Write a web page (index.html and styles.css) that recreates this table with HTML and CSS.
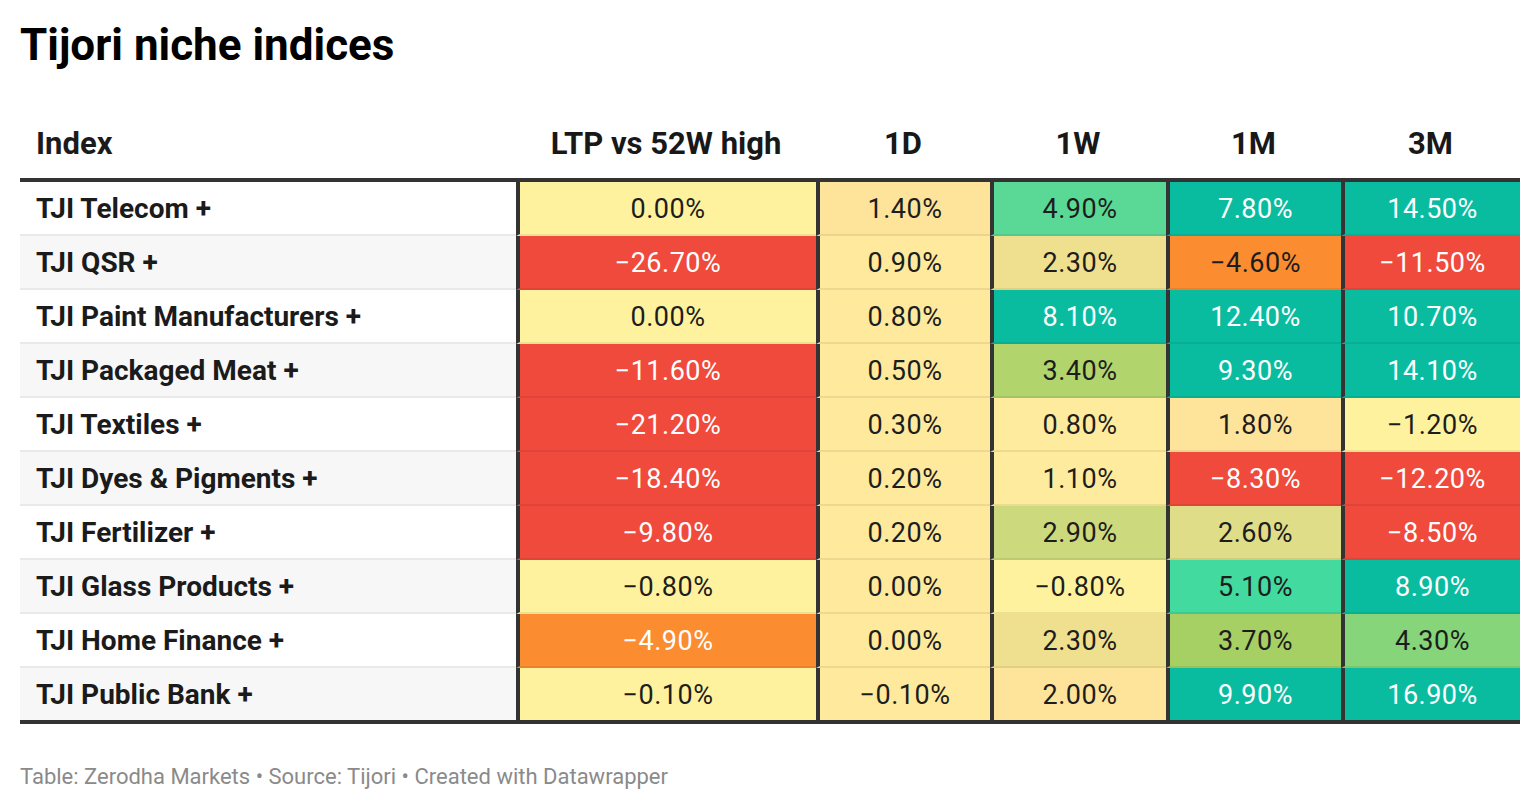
FILE: index.html
```html
<!DOCTYPE html>
<html lang="en">
<head>
<meta charset="utf-8">
<title>Tijori niche indices</title>
<link rel="stylesheet" href="styles.css">
</head>
<body>
<div class="chart">
  <h1 class="title">Tijori niche indices</h1>
  <div class="table">
    <div class="row head">
      <div class="cell name">Index</div>
      <div class="cell">LTP vs 52W high</div>
      <div class="cell">1D</div>
      <div class="cell">1W</div>
      <div class="cell">1M</div>
      <div class="cell">3M</div>
    </div>
    <div class="body">
      <div class="row">
        <div class="cell name">TJI Telecom +</div>
        <div class="cell v y0">0.00%</div>
        <div class="cell v o1">1.40%</div>
        <div class="cell v g4">4.90%</div>
        <div class="cell v tl">7.80%</div>
        <div class="cell v tl">14.50%</div>
      </div>
      <div class="row alt">
        <div class="cell name">TJI QSR +</div>
        <div class="cell v rd">−26.70%</div>
        <div class="cell v y1">0.90%</div>
        <div class="cell v k1">2.30%</div>
        <div class="cell v or dark">−4.60%</div>
        <div class="cell v rd">−11.50%</div>
      </div>
      <div class="row">
        <div class="cell name">TJI Paint Manufacturers +</div>
        <div class="cell v y0">0.00%</div>
        <div class="cell v y1">0.80%</div>
        <div class="cell v tl">8.10%</div>
        <div class="cell v tl">12.40%</div>
        <div class="cell v tl">10.70%</div>
      </div>
      <div class="row alt">
        <div class="cell name">TJI Packaged Meat +</div>
        <div class="cell v rd">−11.60%</div>
        <div class="cell v y1">0.50%</div>
        <div class="cell v g2">3.40%</div>
        <div class="cell v tl">9.30%</div>
        <div class="cell v tl">14.10%</div>
      </div>
      <div class="row">
        <div class="cell name">TJI Textiles +</div>
        <div class="cell v rd">−21.20%</div>
        <div class="cell v y1">0.30%</div>
        <div class="cell v y2">0.80%</div>
        <div class="cell v o1">1.80%</div>
        <div class="cell v y0">−1.20%</div>
      </div>
      <div class="row alt">
        <div class="cell name">TJI Dyes &amp; Pigments +</div>
        <div class="cell v rd">−18.40%</div>
        <div class="cell v y1">0.20%</div>
        <div class="cell v y2">1.10%</div>
        <div class="cell v rd">−8.30%</div>
        <div class="cell v rd">−12.20%</div>
      </div>
      <div class="row">
        <div class="cell name">TJI Fertilizer +</div>
        <div class="cell v rd">−9.80%</div>
        <div class="cell v y1">0.20%</div>
        <div class="cell v g1">2.90%</div>
        <div class="cell v k2">2.60%</div>
        <div class="cell v rd">−8.50%</div>
      </div>
      <div class="row alt">
        <div class="cell name">TJI Glass Products +</div>
        <div class="cell v y0">−0.80%</div>
        <div class="cell v y1">0.00%</div>
        <div class="cell v y0">−0.80%</div>
        <div class="cell v g5">5.10%</div>
        <div class="cell v tl">8.90%</div>
      </div>
      <div class="row">
        <div class="cell name">TJI Home Finance +</div>
        <div class="cell v or">−4.90%</div>
        <div class="cell v y1">0.00%</div>
        <div class="cell v k1">2.30%</div>
        <div class="cell v g3">3.70%</div>
        <div class="cell v g6">4.30%</div>
      </div>
      <div class="row alt last">
        <div class="cell name">TJI Public Bank +</div>
        <div class="cell v y0">−0.10%</div>
        <div class="cell v y1">−0.10%</div>
        <div class="cell v o1">2.00%</div>
        <div class="cell v tl">9.90%</div>
        <div class="cell v tl">16.90%</div>
      </div>
    </div>
  </div>
  <p class="footer">Table: Zerodha Markets • Source: Tijori • Created with Datawrapper</p>
</div>
</body>
</html>
```
FILE: styles.css
```css
html, body {
  margin: 0;
  padding: 0;
  background: #ffffff;
}

.chart {
  padding: 0 20px;
  font-family: Roboto, "Liberation Sans", Arial, sans-serif;
  color: #1d1d1d;
}

.title {
  margin: 0;
  padding-top: 19px;
  font-size: 44px;
  line-height: 52px;
  font-weight: 700;
  color: #000000;
  height: 90px;
  box-sizing: border-box;
}

.table {
  width: 1500px;
}

.row {
  display: grid;
  grid-template-columns: 496px 300px 174px 176px 175px 179px;
  height: 54px;
}

.row.head {
  height: 70px;
  margin-top: 18px;
  border-bottom: 4px solid #333333;
}

.head .cell {
  font-weight: 700;
  font-size: 31px;
  color: #181818;
  border-left: none;
  justify-content: center;
}

.head .cell.name {
  justify-content: flex-start;
  font-size: 31px;
}

.cell {
  display: flex;
  align-items: center;
  justify-content: center;
  font-size: 27px;
  box-sizing: border-box;
}

.cell.name {
  justify-content: flex-start;
  padding-left: 16px;
  font-weight: 700;
  font-size: 28px;
  color: #1b1b1b;
}

.body .row {
  border-bottom: 2px solid rgba(0, 0, 0, 0.085);
  box-sizing: border-box;
}

.body .row.last {
  border-bottom: 4px solid #333333;
  height: 56px;
}

.row.alt .cell.name {
  background: #f7f7f7;
}

.cell.v {
  border-left: 4px solid #333333;
  letter-spacing: 0.5px;
  padding-top: 1px;
}

.body .row .cell.v {
  margin-bottom: -2px;
  border-bottom: 2px solid rgba(0, 0, 0, 0.07);
}

.body .row.last .cell.v {
  margin-bottom: 0;
  border-bottom: none;
}

.y0 { background: #fef29f; }
.y1 { background: #fee99c; }
.y2 { background: #feeb9d; }
.o1 { background: #fee39b; }
.k1 { background: #efe08f; }
.k2 { background: #dfdd87; }
.g1 { background: #cdd97d; }
.g2 { background: #b2d46d; }
.g3 { background: #a6cf64; }
.g4 { background: #5ad896; }
.g5 { background: #42da9e; }
.g6 { background: #86d57a; }
.tl { background: #0abc9f; color: #ffffff; }
.rd { background: #ef4a3c; color: #ffffff; }
.or { background: #fb8c2f; color: #ffffff; }
.or.dark { color: #1d1d1d; }

.footer {
  margin: 40px 0 0;
  font-size: 22px;
  line-height: 26px;
  color: #8a8a8a;
}
```
